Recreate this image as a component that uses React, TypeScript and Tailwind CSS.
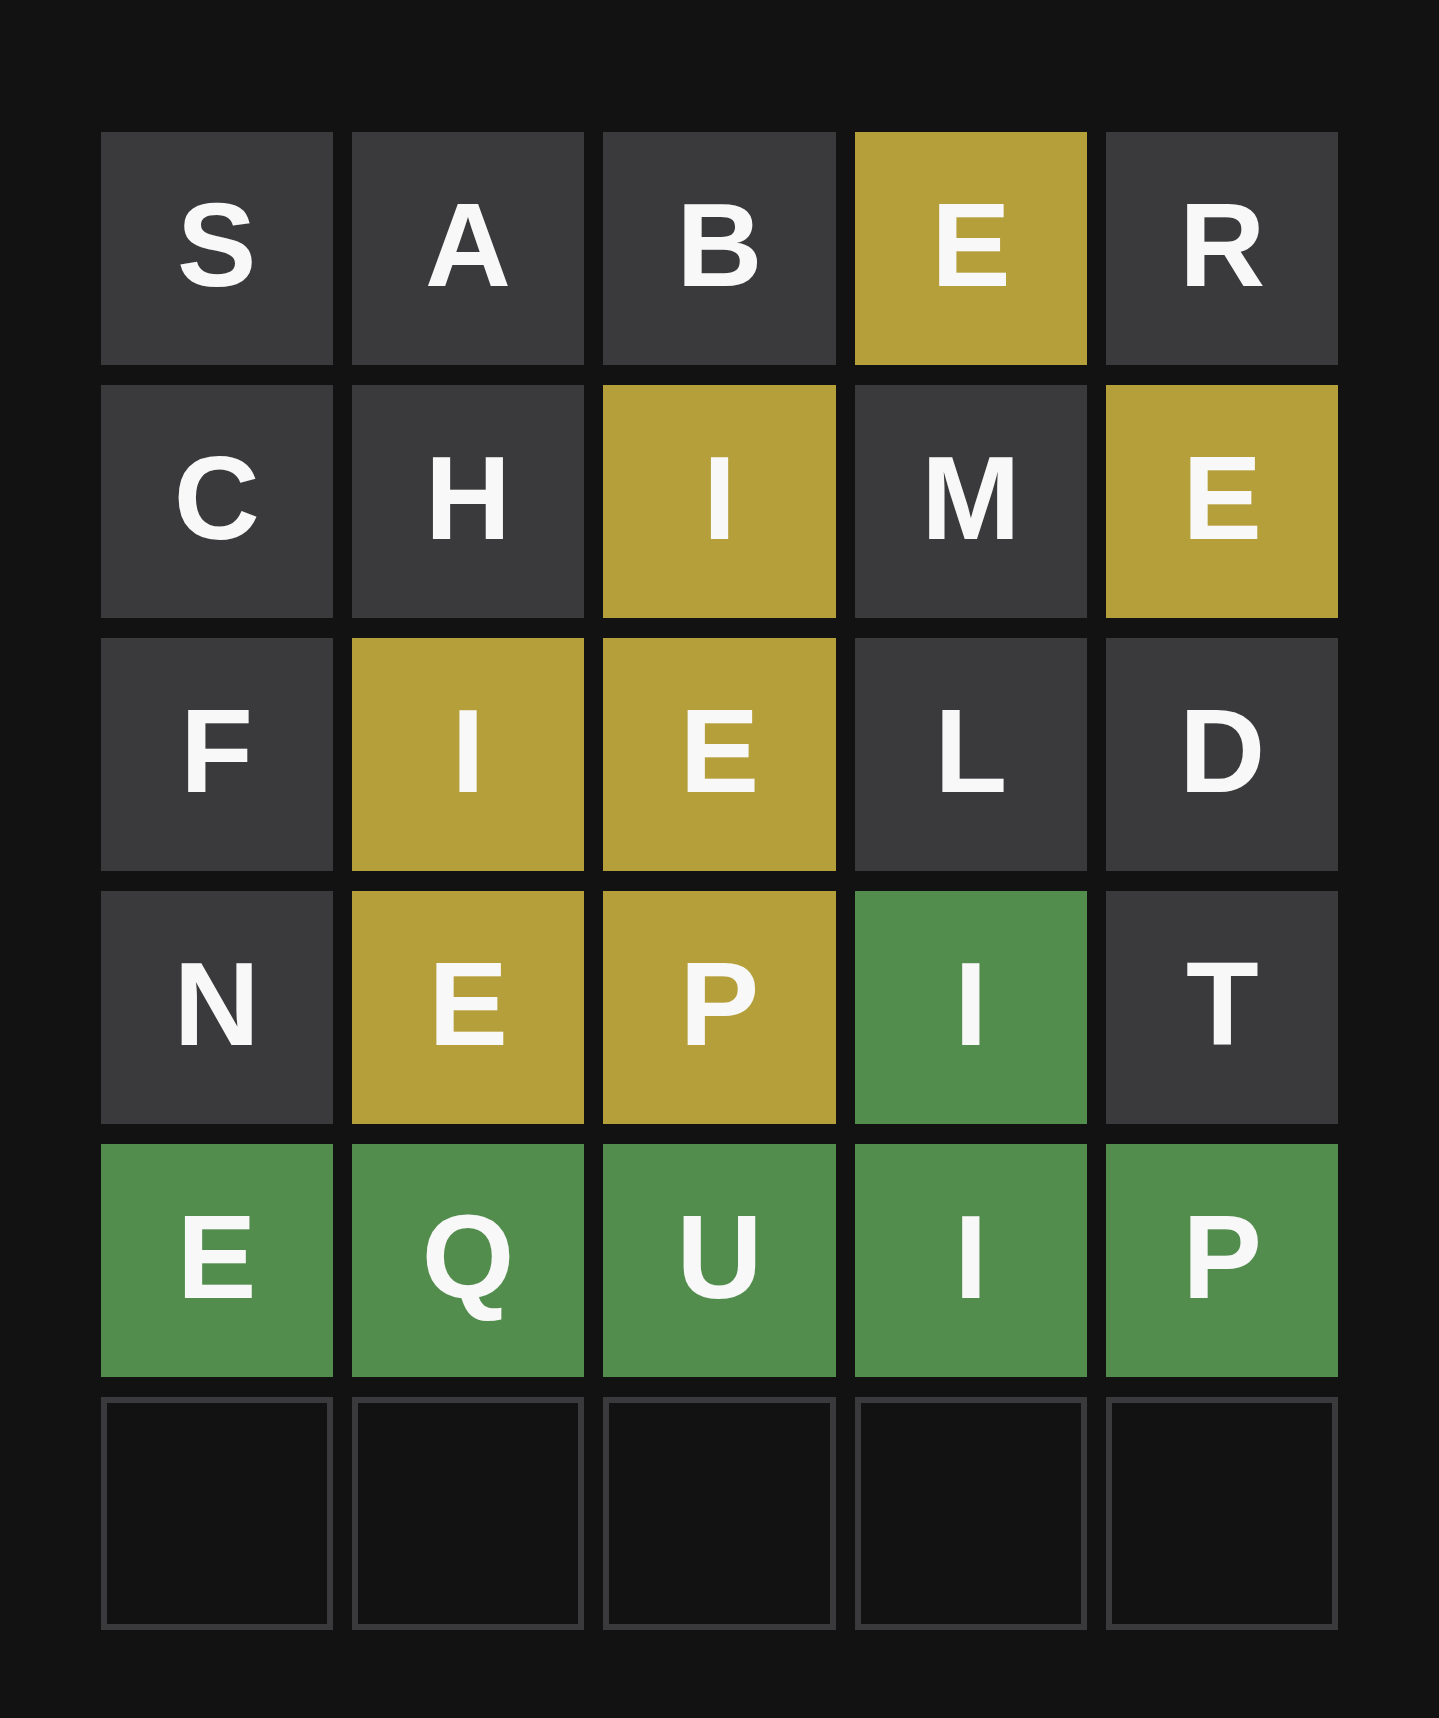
import React from "react";

type S = "a" | "p" | "c" | "e";
const rows: [string, S][][] = [
  [["S","a"],["A","a"],["B","a"],["E","p"],["R","a"]],
  [["C","a"],["H","a"],["I","p"],["M","a"],["E","p"]],
  [["F","a"],["I","p"],["E","p"],["L","a"],["D","a"]],
  [["N","a"],["E","p"],["P","p"],["I","c"],["T","a"]],
  [["E","c"],["Q","c"],["U","c"],["I","c"],["P","c"]],
  [["","e"],["","e"],["","e"],["","e"],["","e"]],
];

const cls: Record<S, string> = {
  a: "bg-[#3a3a3c]",
  p: "bg-[#b59f3b]",
  c: "bg-[#538d4e]",
  e: "bg-[#121213] border-[6px] border-[#3a3a3c]",
};

export default function App() {
  return (
    <div className="min-h-[1718px] w-full bg-[#121213] flex justify-center pt-[132px]">
      <div className="w-[1238px] grid grid-cols-5 gap-x-[19px] gap-y-[20px] auto-rows-[233px] h-fit">
        {rows.flat().map(([l, s], i) => (
          <div
            key={i}
            className={`${cls[s]} flex items-center justify-center pb-[8px] text-[#f8f8f8] font-bold text-[119px] leading-none select-none`}
            style={{ fontFamily: '"Liberation Sans", Arial, sans-serif' }}
          >
            {l}
          </div>
        ))}
      </div>
    </div>
  );
}
